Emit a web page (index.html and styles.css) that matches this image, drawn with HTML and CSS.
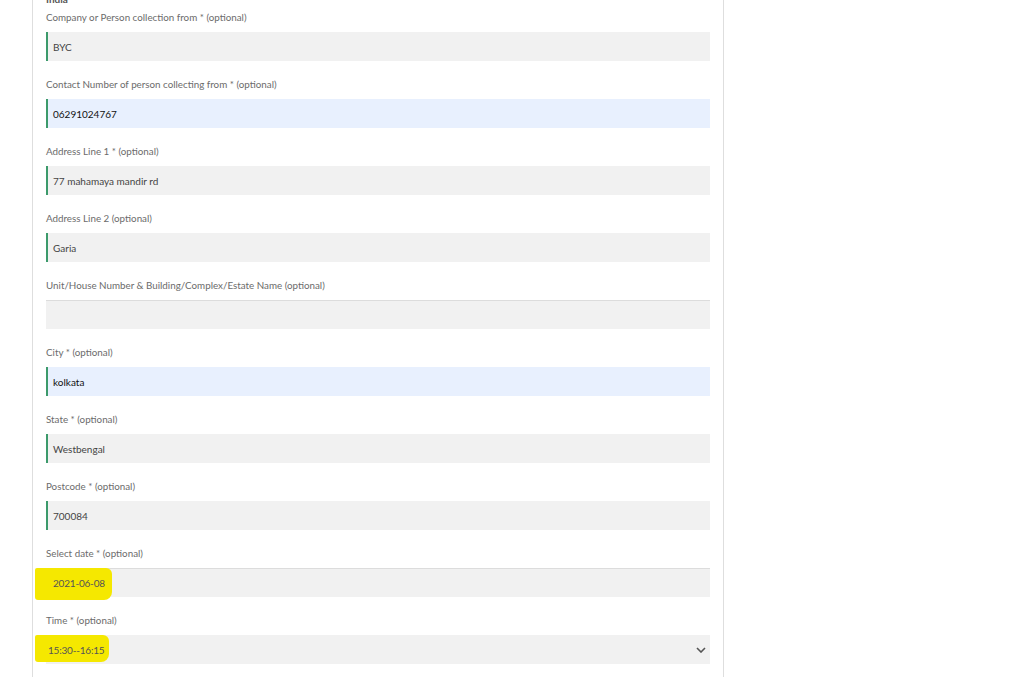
FILE: index.html
```html
<!DOCTYPE html>
<html>
<head>
<meta charset="utf-8">
<link rel="stylesheet" href="styles.css">
</head>
<body>
<div class="panel">
  <div class="country">India</div>
  <div class="field">
    <div class="label">Company or Person collection from * (optional)</div>
    <div class="input valid">BYC</div>
  </div>
  <div class="field">
    <div class="label">Contact Number of person collecting from * (optional)</div>
    <div class="input valid autofill">06291024767</div>
  </div>
  <div class="field">
    <div class="label">Address Line 1 * (optional)</div>
    <div class="input valid">77 mahamaya mandir rd</div>
  </div>
  <div class="field">
    <div class="label">Address Line 2 (optional)</div>
    <div class="input valid">Garia</div>
  </div>
  <div class="field">
    <div class="label">Unit/House Number &amp; Building/Complex/Estate Name (optional)</div>
    <div class="input plain"></div>
  </div>
  <div class="field">
    <div class="label">City * (optional)</div>
    <div class="input valid autofill">kolkata</div>
  </div>
  <div class="field">
    <div class="label">State * (optional)</div>
    <div class="input valid">Westbengal</div>
  </div>
  <div class="field">
    <div class="label">Postcode * (optional)</div>
    <div class="input valid">700084</div>
  </div>
  <div class="field">
    <div class="label">Select date * (optional)</div>
    <div class="input plain"><span class="mark mark-date">2021-06-08</span></div>
  </div>
  <div class="field">
    <div class="label">Time * (optional)</div>
    <div class="input select"><span class="mark mark-time">15:30--16:15</span>
      <svg class="chev" width="10" height="6" viewBox="0 0 10 6"><path d="M1 1 L5 5 L9 1" fill="none" stroke="#555" stroke-width="1.6"/></svg>
    </div>
  </div>
</div>
</body>
</html>
```
FILE: styles.css
```css
html, body {
  margin: 0;
  padding: 0;
  background: #fff;
  overflow: hidden;
}
body {
  font-family: Lato, "Liberation Sans", sans-serif;
  height: 677px;
}
.panel {
  margin-left: 32px;
  width: 664px;
  padding: 0 13px 0 13px;
  border-left: 1px solid #dedede;
  border-right: 1px solid #dedede;
  min-height: 700px;
  box-sizing: content-box;
}
.country {
  margin-top: -10px;
  height: 18px;
  line-height: 18px;
  font-size: 10px;
  font-weight: bold;
  color: #555;
}
.field {
  display: flex;
  flex-direction: column;
}
.label {
  font-size: 9.8px;
  line-height: 18px;
  color: #6b6b6b;
  margin-bottom: 6px;
}
.input {
  height: 29px;
  box-sizing: border-box;
  background: #f1f1f1;
  display: flex;
  align-items: center;
  padding-left: 5px;
  font-size: 10px;
  color: #444;
  margin-bottom: 14px;
  position: relative;
}
.input.valid {
  border-left: 2px solid #3c9a6b;
}
.input.autofill {
  background: #e8f0fe;
  color: #111;
}
.input.plain {
  border-top: 1px solid #dcdcdc;
  padding-left: 7px;
}
.input.select {
  padding-left: 2px;
  justify-content: space-between;
  padding-right: 4px;
}
.mark {
  position: relative;
  z-index: 0;
  color: #555;
  letter-spacing: -0.2px;
}
.mark::before {
  content: "";
  position: absolute;
  z-index: -1;
  background: #f5e800;
  border-radius: 2px 6px 8px 3px;
}
.mark-date::before {
  left: -18px;
  right: -7px;
  top: -9px;
  bottom: -11px;
}
.mark-time::before {
  left: -13px;
  right: -5px;
  top: -9px;
  bottom: -6px;
}
.chev {
  display: block;
}
```
